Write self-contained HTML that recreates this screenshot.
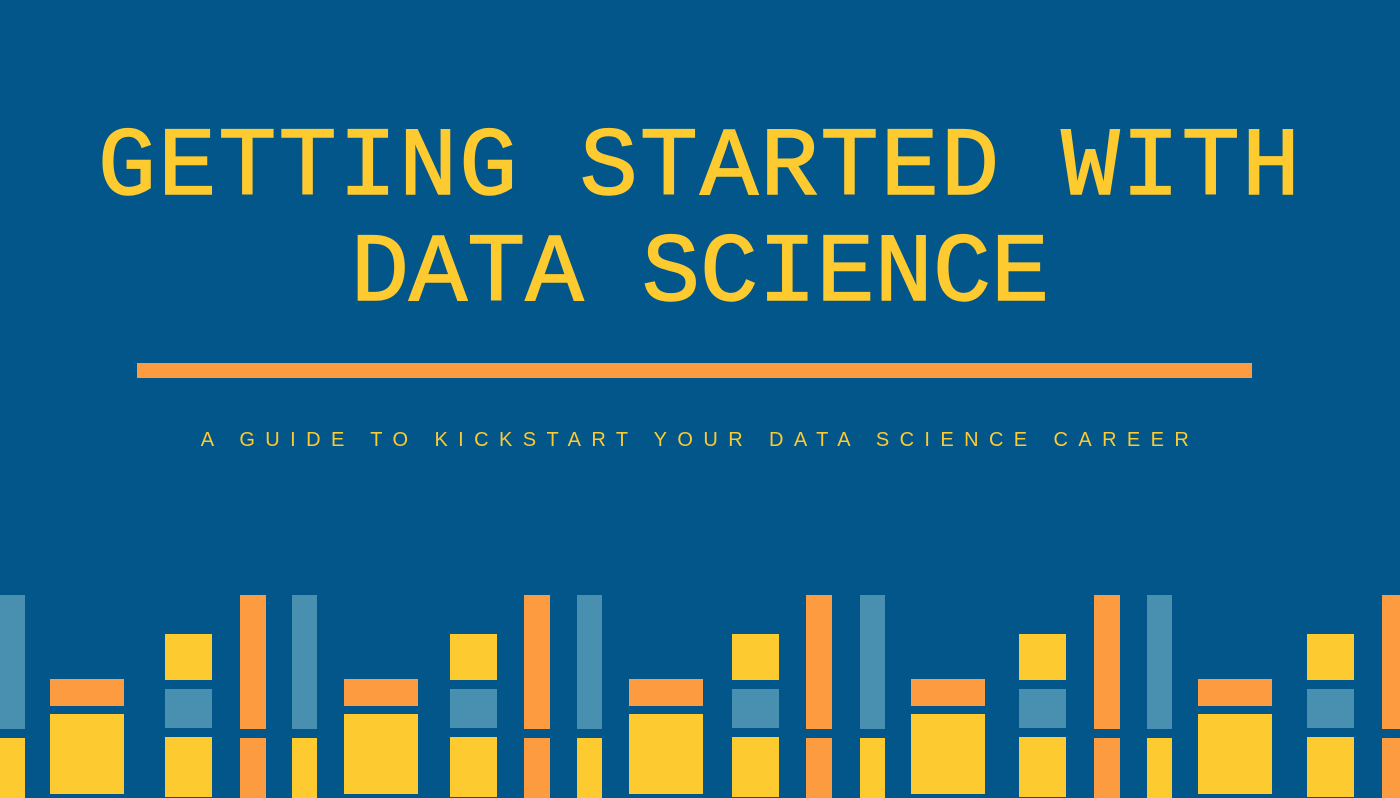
<!DOCTYPE html>
<html><head><meta charset="utf-8"><style>
html,body{margin:0;padding:0}
body{width:1400px;height:788px;background:#02568a;position:relative;overflow:hidden;font-family:"Liberation Mono",monospace}
.t{position:absolute;left:0;width:1400px;text-align:center;color:#fdca30;font-size:97px;line-height:1;letter-spacing:2px;white-space:nowrap;-webkit-text-stroke:1.5px #fdca30}
.s{position:absolute;left:0;width:1400px;text-align:center;color:#fdca30;font-family:"Liberation Sans",sans-serif;font-size:20px;letter-spacing:10.4px;top:429px;white-space:nowrap}
.b{position:absolute}
.y{background:#fdca30}.o{background:#fd9b40}.l{background:#4990b0}
</style></head><body>
<div class="t" style="top:121px">GETTING STARTED WITH</div>
<div class="t" style="top:227px;letter-spacing:0px">DATA SCIENCE</div>
<div class="b o" style="left:137px;top:363px;width:1115px;height:15px"></div>
<div class="s">A GUIDE TO KICKSTART YOUR DATA SCIENCE CAREER</div>
<div id="bars"></div>
<script>
var g=[[0,50,165,240],[292,344,450,524],[577,629,732,806],[860,911,1019,1094],[1147,1198,1307,1382]];
var h='';
function r(c,x,y,w,hh){h+='<div class="b '+c+'" style="left:'+x+'px;top:'+y+'px;width:'+w+'px;height:'+hh+'px"></div>';}
g.forEach(function(p){
r('l',p[0],595,25,134);r('y',p[0],738,25,60);
r('o',p[1],679,74,27);r('y',p[1],714,74,80);
r('y',p[2],634,47,46);r('l',p[2],689,47,39);r('y',p[2],737,47,60);
r('o',p[3],595,26,134);r('o',p[3],738,26,60);
});
document.getElementById('bars').innerHTML=h;
</script>
</body></html>
